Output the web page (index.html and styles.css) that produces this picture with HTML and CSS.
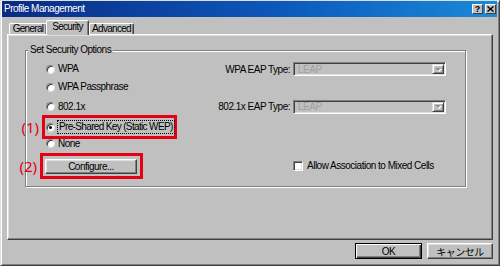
FILE: index.html
```html
<!DOCTYPE html>
<html lang="ja">
<head>
  <meta charset="UTF-8">
  <meta name="viewport" content="width=device-width, initial-scale=1.0">
  <title>Profile Management</title>
  <link rel="stylesheet" href="styles.css">
</head>
<body>

  <div class="window">
    <div class="titlebar">
      <span class="title">Profile Management</span>
      <span class="tbtns">
        <span class="tbtn">?</span>
        <span class="tbtn">
          <svg width="7" height="6" viewBox="0 0 7 6"><path d="M0.5 0.5 L6.5 5.5 M6.5 0.5 L0.5 5.5" stroke="#000" stroke-width="1.4"/></svg>
        </span>
      </span>
    </div>

    <div class="tabs">
      <div class="tab">General</div>
      <div class="tab active">Security</div>
      <div class="tab">Advanced</div>
    </div>

    <div class="panel">
      <div class="group">
        <div class="legend">Set Security Options</div>
        <div class="opts">
          <label class="radio"><span class="dot"></span>WPA</label>
          <span class="lbl">WPA EAP Type:</span>
          <span class="combo"><span class="val">LEAP</span><span class="arrow"></span></span>

          <label class="radio full"><span class="dot"></span>WPA Passphrase</label>

          <label class="radio"><span class="dot"></span>802.1x</label>
          <span class="lbl">802.1x EAP Type:</span>
          <span class="combo"><span class="val">LEAP</span><span class="arrow"></span></span>

          <div class="mark full">
            <span class="num">(1)</span>
            <label class="radio"><span class="dot on"></span><span class="focus">Pre-Shared Key (Static WEP)</span></label>
          </div>

          <label class="radio full"><span class="dot"></span>None</label>

          <div class="mark btnmark">
            <span class="num">(2)</span>
            <button class="btn configure">Configure...</button>
          </div>
          <label class="check"><span class="box"></span>Allow Association to Mixed Cells</label>
        </div>
      </div>
    </div>

    <div class="footer">
      <button class="btn default">OK</button>
      <button class="btn">キャンセル</button>
    </div>
  </div>

</body>
</html>
```

FILE: styles.css
```css
* {
  box-sizing: border-box;
}
body {
  margin: 0;
  font-family: "Liberation Sans", Arial, "Noto Sans CJK JP", sans-serif;
  font-size: 10px;
  letter-spacing: -0.5px;
  white-space: nowrap;
  color: #000;
  background: #c0c0c0;
}
.window {
  width: 500px;
  height: 266px;
  background: #c0c0c0;
  border: 1px solid;
  border-color: #dfdfdf #404040 #404040 #dfdfdf;
  box-shadow: inset 1px 1px #fff, inset -1px -1px #808080;
  padding: 0 2px 2px 1px;
}
.titlebar {
  height: 16px;
  display: flex;
  justify-content: space-between;
  align-items: center;
  padding: 0 1px 0 2px;
  background: linear-gradient(to right, #0a2a84, #0c5cc0 60%, #1a8ad8);
  color: #fff;
}
.title {
  line-height: 16px;
}
.tbtns {
  display: flex;
  gap: 2px;
}
.tbtn {
  width: 11px;
  height: 10px;
  display: flex;
  justify-content: center;
  align-items: center;
  background: #c0c0c0;
  color: #000;
  font-weight: bold;
  font-size: 9px;
  letter-spacing: 0;
  border: 1px solid;
  border-color: #fff #404040 #404040 #fff;
}
.tabs {
  display: flex;
  align-items: flex-end;
  height: 14px;
  margin: 3px 0 0 7px;
}
.tab {
  height: 11px;
  line-height: 10px;
  text-align: center;
  letter-spacing: -0.7px;
  border: 1px solid;
  border-bottom: 0;
  border-color: #fff #404040 transparent #fff;
  border-radius: 2px 2px 0 0;
  box-shadow: inset -1px 0 #808080;
}
.tab:nth-child(1) {
  width: 38px;
}
.tab:nth-child(3) {
  width: 45px;
}
.tab.active {
  width: 43px;
  height: 15px;
  line-height: 12px;
  margin: 0 0 -1px -1px;
  background: #c0c0c0;
  position: relative;
  z-index: 1;
}
.panel {
  width: 486px;
  height: 206px;
  margin-left: 5px;
  border: 1px solid;
  border-color: #fff #404040 #404040 #fff;
  box-shadow: inset -1px -1px #808080, inset 1px 1px #dfdfdf;
  padding: 15px 0 0 17px;
}
.group {
  width: 441px;
  height: 137px;
  border: 1px solid #808080;
  box-shadow: inset 1px 1px #fff, 1px 1px #fff;
}
.legend {
  display: table;
  margin: -7px 0 0 2px;
  padding: 0 2px;
  line-height: 12px;
  background: #c0c0c0;
}
.opts {
  display: grid;
  grid-template-columns: 160px 81px 153px;
  grid-template-rows: 18px 18px 21px 20px 13px 32px;
  column-gap: 3px;
  align-items: center;
  margin: 4px 0 0 20px;
}
.full {
  grid-column: 1 / -1;
  justify-self: start;
}
.radio, .check {
  display: flex;
  align-items: center;
  gap: 3px;
  line-height: 12px;
}
.dot {
  flex: none;
  width: 9px;
  height: 9px;
  border-radius: 50%;
  background: #fff;
  border: 1px solid;
  border-color: #808080 #dfdfdf #dfdfdf #808080;
  box-shadow: inset 1px 1px #404040;
  display: flex;
  justify-content: center;
  align-items: center;
}
.dot.on::after {
  content: "";
  width: 3px;
  height: 3px;
  border-radius: 50%;
  background: #000;
}
.lbl {
  justify-self: end;
}
.combo {
  height: 14px;
  display: flex;
  align-items: center;
  border: 1px solid;
  border-color: #808080 #fff #fff #808080;
  box-shadow: inset 1px 1px #404040, inset -1px -1px #dfdfdf;
  padding: 1px;
}
.val {
  flex: 1;
  padding-left: 3px;
  color: #a0a0a0;
  line-height: 11px;
}
.arrow {
  width: 12px;
  height: 10px;
  display: flex;
  justify-content: center;
  align-items: center;
  border: 1px solid;
  border-color: #dfdfdf #404040 #404040 #dfdfdf;
  box-shadow: inset 1px 1px #fff, inset -1px -1px #808080;
  background: #c0c0c0;
}
.arrow::after {
  content: "";
  border: 3px solid transparent;
  border-top: 3px solid #909090;
  border-bottom: 0;
  filter: drop-shadow(1px 1px 0 #fff);
}
.mark {
  position: relative;
  display: flex;
  align-items: center;
  width: 135px;
  height: 24px;
  margin-left: -4px;
  padding-left: 1px;
  border: 3px solid #e60014;
}
.num {
  position: absolute;
  right: calc(100% + 6px);
  top: 50%;
  transform: translateY(-50%);
  color: #e60014;
  font-family: "Noto Sans", "Liberation Sans", sans-serif;
  font-size: 15px;
  letter-spacing: 0;
  line-height: 16px;
}
.focus {
  outline: 1px dotted #000;
  padding: 0 1px;
  line-height: 12px;
  letter-spacing: -0.65px;
}
.btnmark {
  width: 103px;
  height: 26px;
  margin-left: -6px;
  padding: 3px 3px 2px 2px;
}
.btn {
  height: 16px;
  padding: 0;
  font-family: inherit;
  font-size: 10px;
  letter-spacing: -0.5px;
  color: #000;
  background: #c0c0c0;
  border: 1px solid;
  border-color: #fff #404040 #404040 #fff;
  box-shadow: inset -1px -1px #808080, inset 1px 1px #dfdfdf;
}
.configure {
  width: 92px;
  height: 15px;
}
.check {
  grid-column: 3;
  gap: 4px;
}
.box {
  width: 10px;
  height: 10px;
  background: #fff;
  border: 1px solid;
  border-color: #808080 #fff #fff #808080;
  box-shadow: inset 1px 1px #404040, inset -1px -1px #dfdfdf;
}
.footer {
  display: flex;
  justify-content: flex-end;
  gap: 5px;
  margin-top: 3px;
  padding-right: 4px;
}
.footer .btn {
  width: 66px;
}
.footer .btn.default {
  width: 67px;
  border: 1px solid #000;
  box-shadow: inset 1px 1px #fff, inset -1px -1px #404040, inset -2px -2px #808080;
}
```
